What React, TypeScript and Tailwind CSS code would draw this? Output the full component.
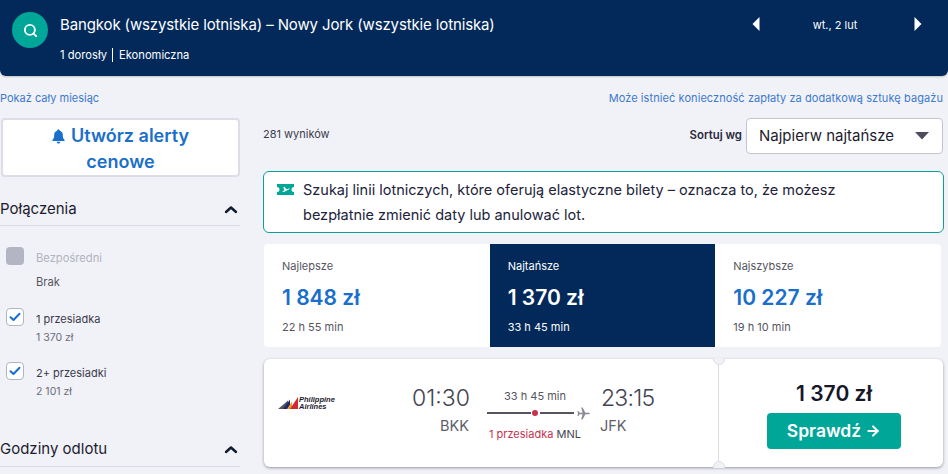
import { ArrowRight, Search } from 'lucide-react';

const NAVY = 'bg-[#02295a]';

function Chevron() {
  return (
    <svg width="14" height="9" viewBox="0 0 14 9" className="mr-[1px]">
      <path d="M2 7 L7 2.5 L12 7" fill="none" stroke="#0e1a2e" strokeWidth="2.4" strokeLinecap="round" strokeLinejoin="round" />
    </svg>
  );
}

function Check() {
  return (
    <div className="w-[18px] h-[18px] rounded-[4px] border border-[#b4b5c2] bg-white flex items-center justify-center">
      <svg width="12" height="10" viewBox="0 0 12 10">
        <path d="M1.5 5.2 L4.5 8 L10.5 1.8" fill="none" stroke="#1570d0" strokeWidth="2" strokeLinecap="round" strokeLinejoin="round" />
      </svg>
    </div>
  );
}

function Stop({ label, price, y }: { label: string; price: string; y: string }) {
  return (
    <div className={`flex pl-[6px] ${y}`}>
      <div className="pt-[1px]"><Check /></div>
      <div className="ml-[12px]">
        <div className="text-[11px] leading-[20px] text-[#3a3a4c] mt-[2px]">{label}</div>
        <div className="text-[10.5px] leading-[20px] text-[#6c6c78] -mt-[1px]">{price}</div>
      </div>
    </div>
  );
}

const tabs = [
  { name: 'Najlepsze', price: '1 848 zł', time: '22 h 55 min', active: false },
  { name: 'Najtańsze', price: '1 370 zł', time: '33 h 45 min', active: true },
  { name: 'Najszybsze', price: '10 227 zł', time: '19 h 10 min', active: false },
];

export default function App() {
  return (
    <div className="w-[948px] h-[474px] overflow-hidden bg-[#f1f2f8] font-['Inter','Noto_Sans',sans-serif] text-[#1c1c2e]">
      {/* top bar */}
      <header className={`${NAVY} h-[76px] rounded-b-[6px] flex shadow-[0_1px_2px_rgba(0,0,0,0.2)] pl-[12px] pt-[12px]`}>
        <div className="w-[36px] h-[36px] rounded-full bg-[#00a698] flex items-center justify-center">
          <Search size={15} color="white" strokeWidth={3} />
        </div>
        <div className="ml-[12px] w-[652px] text-white">
          <div className="text-[15px] leading-[26px] tracking-[-0.13px]">Bangkok (wszystkie lotniska) – Nowy Jork (wszystkie lotniska)</div>
          <div className="flex items-center mt-[10px] text-[11.2px] leading-[14px]">
            <span className="pr-[5px] border-r border-white">1 dorosły</span>
            <span className="pl-[6px]">Ekonomiczna</span>
          </div>
        </div>
        <div className="flex items-start w-[180px] ml-[40px] text-white pt-[5px]">
          <svg width="8" height="14" viewBox="0 0 8 14"><path d="M7.5 0 V14 L0.5 7 Z" fill="white" /></svg>
          <div className="w-[154px] text-center text-[11px] leading-[16px] pr-[4px]">wt., 2 lut</div>
          <svg width="8" height="14" viewBox="0 0 8 14"><path d="M0.5 0 V14 L7.5 7 Z" fill="white" /></svg>
        </div>
      </header>

      {/* links */}
      <div className="flex justify-between pr-[5px] mt-[15px] text-[11px] leading-[14px] text-[#3d79cf]">
        <span>Pokaż cały miesiąc</span>
        <span className="tracking-[0.08px]">Może istnieć konieczność zapłaty za dodatkową sztukę bagażu</span>
      </div>

      <div className="flex mt-[13px]">
        {/* filters */}
        <aside className="w-[240px] shrink-0">
          <div className="ml-[1px] w-[239px] h-[59px] bg-white border-2 border-[#dddde5] rounded-[4px] text-center text-[18px] leading-[24px] font-semibold text-[#1a6fca] pt-[4px]">
            <span className="inline-flex items-center gap-[6px]">
              <svg width="13" height="15" viewBox="0 0 13 15">
                <path d="M6.5 0.5 C7.3 0.5 7.8 1 7.9 1.7 C10 2.3 10.8 4 10.8 6 C10.8 8.5 11.3 9.8 12.6 11 L12.6 12 L0.4 12 L0.4 11 C1.7 9.8 2.2 8.5 2.2 6 C2.2 4 3 2.3 5.1 1.7 C5.2 1 5.7 0.5 6.5 0.5 Z M4.6 12.8 H8.4 C8.2 14 7.5 14.6 6.5 14.6 C5.5 14.6 4.8 14 4.6 12.8 Z" fill="#1a6fca" />
              </svg>
              Utwórz alerty
            </span>
            <br />
            cenowe
          </div>

          <div className="flex items-center justify-between h-[34px] mt-[15px] border-b border-[#dddde5] text-[15px] pr-[1px] pt-[2px]">
            <span>Połączenia</span>
            <Chevron />
          </div>

          <div className="flex pl-[6px] mt-[21px]">
            <div className="w-[18px] h-[18px] rounded-[4px] bg-[#b4b5c4]" />
            <div className="ml-[12px] text-[11.2px] leading-[20px]">
              <div className="text-[#b2b2bf] mt-[1px]">Bezpośredni</div>
              <div className="text-[#55555f] mt-[4px]">Brak</div>
            </div>
          </div>

          <Stop label="1 przesiadka" price="1 370 zł" y="mt-[15px]" />
          <Stop label="2+ przesiadki" price="2 101 zł" y="mt-[13px]" />

          <div className="flex items-center justify-between h-[34px] mt-[31px] border-b border-[#dddde5] text-[15px] pr-[1px]">
            <span>Godziny odlotu</span>
            <Chevron />
          </div>
        </aside>

        {/* results */}
        <main className="ml-[23px] w-[681px]">
          <div className="flex items-center h-[36px] w-[680px]">
            <span className="text-[11px] text-[#3c3c4a] -translate-y-[2px]">281 wyników</span>
            <span className="ml-auto text-[11.4px] font-semibold text-[#2a2a3c]">Sortuj wg</span>
            <div className="ml-[4px] w-[197px] h-[36px] bg-white border border-[#c4c5d0] rounded-[4px] flex items-center justify-between pl-[12px] pr-[13px]">
              <span className="text-[15px]">Najpierw najtańsze</span>
              <svg width="14" height="8" viewBox="0 0 14 8"><path d="M0 0 H14 L7 7.5 Z" fill="#4c4c5c" /></svg>
            </div>
          </div>

          <div className="flex mt-[17px] h-[62px] bg-white border border-[#0e9e96] rounded-[6px] pl-[13px] pt-[5px] w-[681px]">
            <svg width="17" height="11" viewBox="0 0 17 11" className="mt-[7px] shrink-0">
              <path d="M0 0 H17 V3 A2.5 2.5 0 0 0 17 8 V11 H0 V8 A2.5 2.5 0 0 0 0 3 Z" fill="#00a698" />
              <path d="M5 7.5 L7.5 6.2 L6.2 3 L7.3 2.8 L9.5 5.3 L11.8 4.4 C12.6 4.2 12.8 5 12.2 5.3 L7 8 Z" fill="white" />
            </svg>
            <p className="ml-[9px] text-[14.5px] leading-[25px] text-[#22223a] w-[560px]">
              Szukaj linii lotniczych, które oferują elastyczne bilety – oznacza to, że możesz bezpłatnie zmienić daty lub anulować lot.
            </p>
          </div>

          <div className="flex mt-[11px] ml-[1px] w-[677px] h-[103px] bg-white rounded-[4px] overflow-hidden">
            {tabs.map((t) => (
              <div key={t.name} className={`${t.active ? `${NAVY} text-white` : 'text-[#55555f]'} flex-1 pl-[18px] pt-[13px]`}>
                <div className="text-[11px] leading-[18px]">{t.name}</div>
                <div className={`text-[21px] leading-[30px] font-semibold mt-[8px] ${t.active ? 'text-white' : 'text-[#1a6fca]'}`}>{t.price}</div>
                <div className="text-[11px] leading-[18px] mt-[5px]">{t.time}</div>
              </div>
            ))}
          </div>

          <div className="relative flex mt-[12px] ml-[1px] w-[679px] h-[108px] bg-white rounded-[6px] shadow-[0_1px_3px_rgba(37,32,51,0.45)]">
            <div className="w-[455px] shrink-0 flex pl-[14px] border-r border-[#dddde5]">
              <div className="flex items-center gap-[1px] w-[135px] h-[20px] mt-[34px] shrink-0">
                <svg width="20" height="12" viewBox="0 0 20 12">
                  <polygon points="0,12 6,7 10,3.5 10,12" fill="#55555f" />
                  <polygon points="5,12 12,2.5 12,12" fill="#1b2a6b" />
                  <polygon points="9,12 14,4.5 14,12" fill="#e8a020" />
                  <polygon points="12,12 20,0 20,12" fill="#d3282f" />
                </svg>
                <div className="text-[7.5px] leading-[7.5px] font-bold italic text-[#1c1c2e] font-['Liberation_Sans',sans-serif]">
                  Philippine<br />Airlines
                </div>
              </div>
              <div className="w-[56px] text-right text-[#44444f] mr-[18px] shrink-0">
                <div className="text-[23px] leading-[28px] font-light mt-[25px] -translate-x-[1px]">01:30</div>
                <div className="text-[14.5px] leading-[20px] text-[#5d5d6b] mt-[4px]">BKK</div>
              </div>
              <div className="w-[106px] shrink-0 pt-[29px]">
                <div className="w-[96px] text-center text-[11px] leading-[16px] text-[#55555f]">33 h 45 min</div>
                <div className="flex items-center mt-[1px] h-[16px]">
                  <div className="w-[44px] h-[2px] bg-[#55555f]" />
                  <div className="w-[6px] h-[6px] rounded-full bg-[#c8324f] mx-[1px]" />
                  <div className="w-[34px] h-[2px] bg-[#55555f] ml-[1px]" />
                  <svg width="13" height="13" viewBox="0 0 13 13" className="ml-[3px]">
                    <path d="M13 6.5 C13 7 12 7.3 11 7.3 H8.4 L5.6 12.5 H4.2 L5.6 7.3 H2.6 L1.4 9 H0.4 L1 6.5 L0.4 4 H1.4 L2.6 5.7 H5.6 L4.2 0.5 H5.6 L8.4 5.7 H11 C12 5.7 13 6 13 6.5 Z" fill="#8a8a96" />
                  </svg>
                </div>
                <div className="text-[11px] leading-[16px] mt-[5px] ml-[2px] whitespace-nowrap text-[#c8324f]">
                  1 przesiadka <span className="text-[#44444f]">MNL</span>
                </div>
              </div>
              <div className="text-[#44444f] ml-[8px]">
                <div className="text-[23px] leading-[28px] font-light mt-[25px] tracking-[-0.8px]">23:15</div>
                <div className="text-[14.5px] leading-[20px] text-[#5d5d6b] mt-[4px] -ml-[1px]">JFK</div>
              </div>
            </div>
            <div className="flex-1 flex flex-col items-center pt-[22px] pl-[6px]">
              <div className="text-[21px] leading-[26px] font-semibold text-[#161629]">1 370 zł</div>
              <div className="mt-[6px] w-[134px] h-[36px] rounded-[4px] bg-[#00a698] text-white text-[17.5px] font-semibold flex items-center justify-center gap-[4px]">
                Sprawdź
                <ArrowRight size={16} strokeWidth={3} />
              </div>
            </div>
            {/* ticket notches */}
            <div className="absolute left-[449px] -top-[6px] w-[12px] h-[12px] rounded-full bg-[#f1f2f8] border border-[#dddde5] [clip-path:inset(5px_0_0_0)]" />
            <div className="absolute left-[449px] -bottom-[6px] w-[12px] h-[12px] rounded-full bg-[#f1f2f8] border border-[#dddde5] [clip-path:inset(0_0_5px_0)]" />
          </div>
        </main>
      </div>
    </div>
  );
}
